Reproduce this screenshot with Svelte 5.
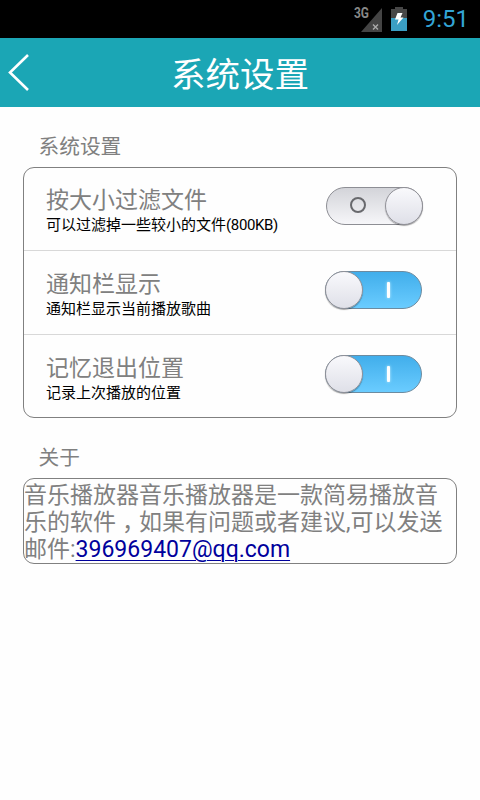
<script lang="ts">
    let settings = $state([
        { title: '按大小过滤文件', hint: '可以过滤掉一些较小的文件', limit: '(800KB)', on: false },
        { title: '通知栏显示', hint: '通知栏显示当前播放歌曲', limit: '', on: true },
        { title: '记忆退出位置', hint: '记录上次播放的位置', limit: '', on: true }
    ]);
</script>

<div class="screen">
    <div class="status">
        <svg class="signal" width="30" height="28" viewBox="0 0 30 28">
            <path d="M28 3V27H7Z" fill="#444" />
            <path d="M19 19.500l5 5m0-5l-5 5" stroke="#aaa" stroke-width="1.400" />
            <text x="0" y="13" textLength="15" lengthAdjust="spacingAndGlyphs">3G</text>
        </svg>
        <svg class="battery" width="16" height="24" viewBox="0 0 16 24">
            <path d="M0 2h4V0h8v2h4v9H0Z" fill="#474747" />
            <path d="M0 11h16v13H0Z" fill="#3b9fc4" />
            <path d="M6.500 6h5L9.500 10.500h3L6 18l1.500-5.500H4Z" fill="#fff" />
        </svg>
        <span class="clock">9:51</span>
    </div>

    <header>
        <svg class="back" width="24" height="40" viewBox="0 0 24 40">
            <path d="M20 2L2 19.500L20 37" fill="none" stroke="#fff" stroke-width="2.600" />
        </svg>
        <h1>系统设置</h1>
    </header>

    <main>
        <h2>系统设置</h2>
        <div class="card">
            {#each settings as item}
                <div class="row">
                    <div class="info">
                        <div class="title">{item.title}</div>
                        <div class="hint">{item.hint}<span class="limit">{item.limit}</span></div>
                    </div>
                    <button
                        class="switch"
                        class:on={item.on}
                        aria-label={item.title}
                        onclick={() => (item.on = !item.on)}
                    >
                        <span class="mark"></span>
                        <span class="knob"></span>
                    </button>
                </div>
            {/each}
        </div>

        <h2 class="second">关于</h2>
        <div class="card about">
            音乐播放器音乐播放器是一款简易播放音乐的软件<span class="comma">，</span>如果有问题或者建议,可以发送邮件:<a href="mailto:396969407@qq.com">396969407@qq.com</a>
        </div>
    </main>
</div>

<style>
    :global(body) {
        background: #fff;
    }

    .screen {
        height: 800px;
        overflow: hidden;
        background: #fefefe;
        font-family: Roboto, "Noto Sans CJK SC", sans-serif;
        color: #808080;
    }

    .status {
        display: flex;
        align-items: center;
        justify-content: flex-end;
        box-sizing: border-box;
        height: 38px;
        padding-right: 11px;
        background: #000;
    }

    .signal {
        margin: 0 7px 0 0;
    }

    .signal text {
        font-size: 14px;
        font-weight: 700;
        fill: #888;
    }

    .battery {
        margin-right: 16px;
    }

    .clock {
        font-size: 24px;
        line-height: 38px;
        color: #33a5d5;
    }

    header {
        display: grid;
        grid-template-columns: 32px 1fr 32px;
        align-items: center;
        height: 69px;
        background: #1ba6b5;
    }

    .back {
        margin-left: 8px;
    }

    h1 {
        margin: 0;
        padding-top: 5px;
        font-size: 34.500px;
        font-weight: 400;
        line-height: 64px;
        text-align: center;
        color: #fff;
    }

    main {
        padding: 25px 23px 0;
    }

    h2 {
        margin: 0 0 5px 15.500px;
        font-size: 20.700px;
        font-weight: 400;
        line-height: 30px;
    }

    .second {
        margin-top: 25px;
    }

    .card {
        box-sizing: border-box;
        border: 1px solid #808080;
        border-radius: 11px;
    }

    .row {
        display: flex;
        align-items: flex-start;
        justify-content: space-between;
        box-sizing: border-box;
        height: 84px;
        padding: 20px 34px 0 22px;
        border-bottom: 1px solid #d8d8d8;
    }

    .row:first-child {
        height: 83px;
        padding-top: 19px;
    }

    .row:last-child {
        height: 82px;
        border-bottom: none;
    }

    .title {
        font-size: 23px;
        line-height: 27px;
    }

    .hint {
        font-size: 15px;
        line-height: 23px;
        color: #000;
    }

    .limit {
        letter-spacing: -0.35px;
    }

    .switch {
        position: relative;
        flex: none;
        box-sizing: border-box;
        width: 97px;
        height: 38px;
        margin-right: -1px;
        padding: 0;
        border: 1px solid #8d8e94;
        border-radius: 19px;
        background: linear-gradient(#d3d4d9, #f6f6f9);
        cursor: pointer;
    }

    .switch.on {
        margin-right: 0;
        border-color: #6c8ba0;
        background: linear-gradient(#41aeeb, #6accff);
    }

    .knob {
        position: absolute;
        top: -1px;
        right: -1px;
        box-sizing: border-box;
        width: 38px;
        height: 38px;
        border: 1px solid #929299;
        border-radius: 50%;
        background: linear-gradient(#f9f9fc, #dfe0e8);
        box-shadow: 0 1px 1px rgba(0, 0, 0, 0.35);
    }

    .on .knob {
        right: auto;
        left: -1px;
    }

    .mark {
        position: absolute;
        top: 9px;
        left: 23px;
        box-sizing: border-box;
        width: 16px;
        height: 16px;
        border: 2px solid #68696d;
        border-radius: 50%;
    }

    .on .mark {
        top: 10px;
        left: 61px;
        width: 3px;
        border: none;
        border-radius: 1px;
        background: #fff;
        box-shadow: 0 0 3px #c9efff;
    }

    .about {
        height: 86px;
        padding: 3px 0 0;
        font-size: 23px;
        line-height: 27px;
    }

    .comma {
        padding: 0 5.500px 0 6px;
        font-feature-settings: "halt";
    }

    a {
        color: #00009c;
        text-decoration-thickness: 1px;
        text-underline-offset: 3px;
    }
</style>
